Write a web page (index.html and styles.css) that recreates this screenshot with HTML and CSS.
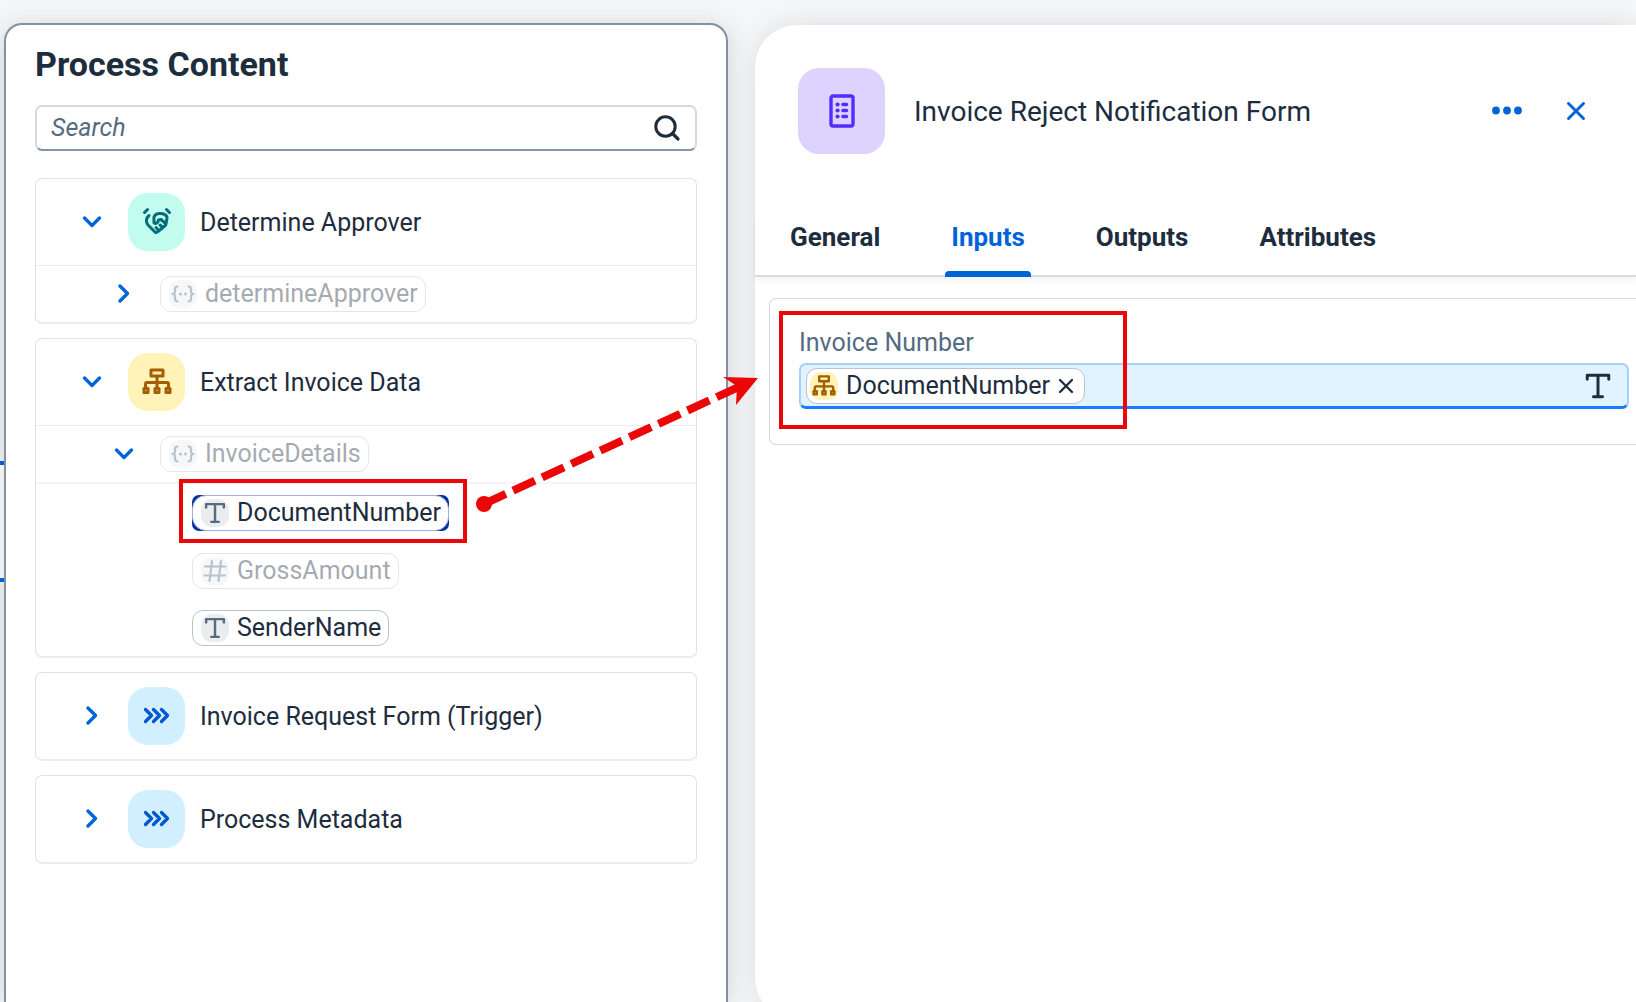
FILE: index.html
```html
<!DOCTYPE html>
<html lang="en">
<head>
<meta charset="utf-8">
<title>Invoice Reject Notification Form</title>
<link rel="stylesheet" href="styles.css">
</head>
<body>
<svg class="defs" aria-hidden="true">
  <symbol id="chev-down" viewBox="0 0 20 20"><path d="M2.500 6 10 13.500 17.500 6" fill="none" stroke="currentColor" stroke-width="3.300" stroke-linecap="round" stroke-linejoin="round"/></symbol>
  <symbol id="chev-right" viewBox="0 0 20 20"><path d="M6 2 13.500 9.500 6 17" fill="none" stroke="currentColor" stroke-width="3.300" stroke-linecap="round" stroke-linejoin="round"/></symbol>
  <symbol id="triple" viewBox="0 0 30 30"><path d="M3.500 8.500 9.500 14.500 3.500 20.500M11.500 8.500 17.500 14.500 11.500 20.500M19.500 8.500 25.500 14.500 19.500 20.500" fill="none" stroke="currentColor" stroke-width="3.300" stroke-linecap="round" stroke-linejoin="round"/></symbol>
  <symbol id="org" viewBox="0 0 30 30"><g fill="none" stroke="currentColor" stroke-width="3" stroke-linejoin="round" stroke-linecap="round"><path d="M9 3h12v6H9zM15 9v12M3.500 21v-4q0-1.500 1.500-1.500h20q1.500 0 1.500 1.500v4"/><path d="M2 21.500h4v4H2zM13 21.500h4v4h-4zM24 21.500h4v4h-4z"/></g></symbol>
  <symbol id="shake" viewBox="0 0 30 30"><g fill="none" stroke="currentColor" stroke-width="3" stroke-linejoin="round" stroke-linecap="round"><path d="M2.500 5.500 5.500 2.500M24.500 2.500 27.500 5.500"/><path d="M7 8.500C4 11 3.500 15 6 18l7 7c1 .8 2 .5 3-.5l5.500-4.500c1-1 2.500-1.500 2.500-3l1-6c0-3-4-5-8-4.500-4 .5-5.500 3-5 5.500v4c2 1 4 0 4.500-3l2.500-.5 4 3.500M14 20.500l2.500 2.500M18 18l3 2.500"/></g></symbol>
  <symbol id="braces" viewBox="0 0 30 30"><g fill="none" stroke="currentColor" stroke-width="2.200" stroke-linecap="round" stroke-linejoin="round"><path d="M9.500 7.500C7 7.500 7 9 7 10.500v2C7 14 6.500 15 4.500 15c2 0 2.500 1 2.500 2.500v2c0 1.500 0 3 2.500 3M20.500 7.500c2.500 0 2.500 1.500 2.500 3v2c0 1.500.5 2.500 2.500 2.500-2 0-2.500 1-2.500 2.500v2c0 1.500 0 3-2.500 3"/></g><circle cx="12.500" cy="15" r="1.500" fill="currentColor"/><circle cx="17.500" cy="15" r="1.500" fill="currentColor"/></symbol>
  <symbol id="type" viewBox="0 0 30 30"><path d="M5.500 9V5.500h19V9M15 5.500v19M11 24.500h8" fill="none" stroke="currentColor" stroke-width="2.600" stroke-linecap="round" stroke-linejoin="round"/></symbol>
  <symbol id="hash" viewBox="0 0 30 30"><path d="M12 5 9.500 25M21 5 18.500 25M5 10.500h20.500M4.500 19.500h20.500" fill="none" stroke="currentColor" stroke-width="2.200" stroke-linecap="round"/></symbol>
  <symbol id="cross" viewBox="0 0 20 20"><path d="M2.500 2.500 17.500 17.500M17.500 2.500 2.500 17.500" fill="none" stroke="currentColor" stroke-width="2.900" stroke-linecap="round"/></symbol>
</svg>

<div class="app">
  <div class="canvas-node"></div>

  <aside class="content-panel">
    <h1 class="panel-title">Process Content</h1>
    <div class="search">
      <input class="search-input" type="search" placeholder="Search" aria-label="Search">
      <button class="icon-btn search-btn" aria-label="Search"><svg class="i28" viewBox="0 0 28 28"><circle cx="12.500" cy="12.500" r="9.700" fill="none" stroke="currentColor" stroke-width="3"/><path d="M19.500 19.500 25 25" stroke="currentColor" stroke-width="3.200" stroke-linecap="round"/></svg></button>
    </div>

    <ul class="cards">
      <li class="card">
        <div class="row head">
          <button class="icon-btn" aria-label="Collapse"><svg class="i20"><use href="#chev-down"/></svg></button>
          <span class="tile teal"><svg class="i30"><use href="#shake"/></svg></span>
          <span class="row-label">Determine Approver</span>
        </div>
        <div class="row level1">
          <button class="icon-btn" aria-label="Expand"><svg class="i20"><use href="#chev-right"/></svg></button>
          <span class="chip off"><span class="mini"><svg class="i30"><use href="#braces"/></svg></span>determineApprover</span>
        </div>
      </li>
      <li class="card">
        <div class="row head">
          <button class="icon-btn" aria-label="Collapse"><svg class="i20"><use href="#chev-down"/></svg></button>
          <span class="tile yellow"><svg class="i30"><use href="#org"/></svg></span>
          <span class="row-label">Extract Invoice Data</span>
        </div>
        <div class="row level1 ruled">
          <button class="icon-btn" aria-label="Collapse"><svg class="i20"><use href="#chev-down"/></svg></button>
          <span class="chip off"><span class="mini"><svg class="i30"><use href="#braces"/></svg></span>InvoiceDetails</span>
        </div>
        <div class="row level2">
          <span class="chip-wrap">
            <span class="chip focused"><span class="mini"><svg class="i28"><use href="#type"/></svg></span>DocumentNumber</span>
            <span class="callout callout-chip"></span>
            <svg class="arrow" viewBox="0 0 290 146" aria-hidden="true"><circle cx="8" cy="136" r="8"/><path class="arrow-line" d="M8 136 266 17.500"/><path d="M282 10 247 9l14 9-1 19z"/></svg>
          </span>
        </div>
        <div class="row level2">
          <span class="chip off"><span class="mini"><svg class="i30"><use href="#hash"/></svg></span>GrossAmount</span>
        </div>
        <div class="row level2">
          <span class="chip"><span class="mini"><svg class="i28"><use href="#type"/></svg></span>SenderName</span>
        </div>
      </li>
      <li class="card">
        <div class="row head">
          <button class="icon-btn" aria-label="Expand"><svg class="i20"><use href="#chev-right"/></svg></button>
          <span class="tile blue"><svg class="i30"><use href="#triple"/></svg></span>
          <span class="row-label">Invoice Request Form (Trigger)</span>
        </div>
      </li>
      <li class="card">
        <div class="row head">
          <button class="icon-btn" aria-label="Expand"><svg class="i20"><use href="#chev-right"/></svg></button>
          <span class="tile blue"><svg class="i30"><use href="#triple"/></svg></span>
          <span class="row-label">Process Metadata</span>
        </div>
      </li>
    </ul>
  </aside>

  <main class="detail-panel">
    <header class="detail-head">
      <span class="form-tile"><svg class="i34" viewBox="0 0 34 34"><rect x="6" y="2" width="22" height="30" rx="2" fill="none" stroke="currentColor" stroke-width="3.400"/><path d="M12.500 10.500h.1M12.500 16.500h.1M12.500 22.500h.1" stroke="currentColor" stroke-width="4.200" stroke-linecap="round"/><path d="M18 10.500h3.500M18 16.500h3.500M18 22.500h3.500" stroke="currentColor" stroke-width="3.600" stroke-linecap="round"/></svg></span>
      <h2 class="detail-title">Invoice Reject Notification Form</h2>
      <button class="icon-btn" aria-label="More"><svg class="i30" viewBox="0 0 30 30"><g fill="currentColor"><circle cx="4" cy="14.500" r="3.900"/><circle cx="15" cy="14.500" r="3.900"/><circle cx="26" cy="14.500" r="3.900"/></g></svg></button>
      <button class="icon-btn" aria-label="Close"><svg class="i20"><use href="#cross"/></svg></button>
    </header>
    <nav class="tabs">
      <a class="tab" href="#general">General</a>
      <a class="tab active" href="#inputs" aria-current="page">Inputs</a>
      <a class="tab" href="#outputs">Outputs</a>
      <a class="tab" href="#attributes">Attributes</a>
    </nav>
    <section class="group">
      <label class="field-label" for="invoice-number">Invoice Number</label>
      <div class="field">
        <span class="chip token"><span class="mini gold"><svg class="i24"><use href="#org"/></svg></span>DocumentNumber<button class="icon-btn dark" aria-label="Remove"><svg class="i16"><use href="#cross"/></svg></button></span>
        <input class="field-input" id="invoice-number" type="text">
        <button class="icon-btn dark" aria-label="Text type"><svg class="i34"><use href="#type"/></svg></button>
      </div>
      <span class="callout callout-field"></span>
    </section>
  </main>
</div>
</body>
</html>
```

FILE: styles.css
```css
* { box-sizing: border-box; }

body {
  margin: 0;
  background: #f5f6f7;
  color: #1d2d3e;
  font: 25px/32px Roboto, "Liberation Sans", sans-serif;
}

h1, h2, ul { margin: 0; padding: 0; }
ul { list-style: none; }
svg { display: block; flex: none; }
.defs { position: absolute; width: 0; height: 0; }

.i16 { width: 16px; height: 16px; }
.i20 { width: 20px; height: 20px; }
.i24 { width: 24px; height: 24px; }
.i28 { width: 28px; height: 28px; }
.i30 { width: 30px; height: 30px; }
.i34 { width: 34px; height: 34px; }

.icon-btn {
  display: inline-flex;
  flex: none;
  padding: 0;
  border: 0;
  background: none;
  color: #0064d9;
}
.icon-btn.dark, .search-btn { color: #1d2d3e; }

.app {
  position: relative;
  display: grid;
  grid-template-columns: minmax(0, 724fr) minmax(0, 881fr);
  gap: 27px;
  min-height: 100vh;
  padding: 23px 0 0 4px;
  overflow: hidden;
}

/* Edge of the diagram node that sits behind the panel */
.canvas-node {
  position: absolute;
  top: 461px;
  left: 0;
  width: 40px;
  height: 121px;
  border: solid #0064d9;
  border-width: 4px 0;
  background: #fff;
}

.content-panel {
  position: relative;
  z-index: 1;
  padding: 22px 29px 0;
  border: 2px solid #8391a1;
  border-bottom: 0;
  border-radius: 18px 18px 0 0;
  background: #fff;
  box-shadow: 0 4px 24px rgba(34, 53, 72, .18);
}

.panel-title {
  font-size: 34px;
  line-height: 34px;
  font-weight: 700;
}

.search {
  display: flex;
  align-items: center;
  height: 46px;
  margin: 24px 0 27px;
  padding: 0 14px;
  border: 2px solid #d3d9e1;
  border-bottom-color: #8396a8;
  border-radius: 7px;
}
.search-input {
  flex: 1;
  min-width: 0;
  padding: 0;
  border: 0;
  outline: 0;
  background: none;
  color: #1d2d3e;
  font: inherit;
}
.search-input::placeholder { color: #556b82; font-style: italic; opacity: 1; }

.cards { display: grid; gap: 14px; }
.card {
  border: 1px solid #dfe1e3;
  border-bottom: 0;
  border-radius: 7px;
}

.row {
  display: flex;
  align-items: center;
  height: 58px;
}
.head {
  height: 88px;
  padding-left: 46px;
}
.head .icon-btn { margin-right: 26px; }
.card .row:last-child { border-bottom: 2px solid #ebecee; border-radius: 0 0 7px 7px; }
.head:not(:last-child) { height: 87px; border-bottom: 1px solid #ebecee; }
.ruled { border-bottom: 2px solid #f4f5f6; }
.level1 { gap: 26px; padding-left: 78px; }
.level2 { padding-left: 156px; }
.row-label { padding-top: 2px; }

.tile {
  display: grid;
  place-items: center;
  width: 57px;
  height: 58px;
  margin-right: 15px;
  border-radius: 20px;
}
.teal { background: #c2fcee; color: #046c7a; }
.yellow { background: #fff3b8; color: #a45d00; }
.blue { background: #d1efff; color: #0057d2; }

.chip {
  display: inline-flex;
  align-items: center;
  gap: 8px;
  height: 36px;
  padding: 0 7px 0 8px;
  border: 1px solid #bcc3ca;
  border-radius: 11px;
  background: #fff;
}
.mini {
  display: flex;
  align-items: center;
  justify-content: center;
  width: 28px;
  height: 28px;
  border-radius: 11px;
  background: #eaecee;
  color: #556b82;
}
.off { opacity: .4; }

.chip-wrap { position: relative; display: inline-flex; }
.focused {
  border-color: #a4b1d6;
  border-radius: 14px;
}
.focused::before {
  content: "";
  position: absolute;
  z-index: -1;
  inset: 0;
  border-radius: 7px;
  background: #0032a5;
}

/* Red annotations drawn over the screen */
.callout {
  position: absolute;
  border: 4px solid #eb0707;
  pointer-events: none;
}
.callout-chip { inset: -16px -18px -12px -13px; }
.callout-field { top: 12px; left: 9px; width: 348px; height: 118px; }
.arrow {
  position: absolute;
  z-index: 3;
  top: -127px;
  left: 284px;
  width: 290px;
  height: 146px;
  fill: #eb0707;
  pointer-events: none;
}
.arrow-line { stroke: #eb0707; stroke-width: 8; stroke-dasharray: 24 8; }

.detail-panel {
  margin: 2px 0 -18px;
  border-radius: 42px 0 0 42px;
  background: #fff;
  box-shadow: 0 0 24px rgba(34, 53, 72, .12);
}

.detail-head {
  display: flex;
  align-items: center;
  padding: 43px 50px 0 43px;
}
.form-tile {
  display: grid;
  place-items: center;
  width: 87px;
  height: 86px;
  border-radius: 21px;
  background: #ded3ff;
  color: #552cff;
}
.detail-title {
  flex: 1;
  padding: 2px 0 0 29px;
  font-size: 28px;
  line-height: 36px;
  font-weight: 400;
}
.detail-head .icon-btn + .icon-btn { margin-left: 44px; }

.tabs {
  display: flex;
  gap: 59px;
  margin-top: 59px;
  padding-left: 29px;
  border-bottom: 2px solid #d9dbdc;
  box-shadow: 0 4px 5px rgba(34, 53, 72, .05);
}
.tab {
  height: 64px;
  margin-bottom: -2px;
  padding: 8px 6px 0;
  color: #1d2d3e;
  font-size: 26px;
  font-weight: 700;
  text-decoration: none;
}
.tab.active {
  position: relative;
  color: #0064d9;
}
.tab.active::after {
  content: "";
  position: absolute;
  inset: auto 0 0;
  height: 6px;
  border-radius: 4px 4px 0 0;
  background: #0064d9;
}

.group {
  position: relative;
  margin: 21px 0 0 14px;
  padding: 28px 7px 35px 29px;
  border: 1px solid #d9d9d9;
  border-right: 0;
  border-radius: 7px 0 0 7px;
}
.field-label { display: block; color: #556b82; }
.field {
  display: flex;
  align-items: center;
  height: 46px;
  margin-top: 4px;
  padding: 0 12px 0 5px;
  border: 2px solid #a6cfff;
  border-bottom: 3px solid #1a7bff;
  border-radius: 7px;
  background: #e1f3ff;
}
.token { padding: 0 10px 0 3px; }
.gold { background: #fff3b8; color: #a45d00; }
.field-input {
  flex: 1;
  min-width: 0;
  border: 0;
  outline: 0;
  background: none;
  color: #1d2d3e;
  font: inherit;
}
```
